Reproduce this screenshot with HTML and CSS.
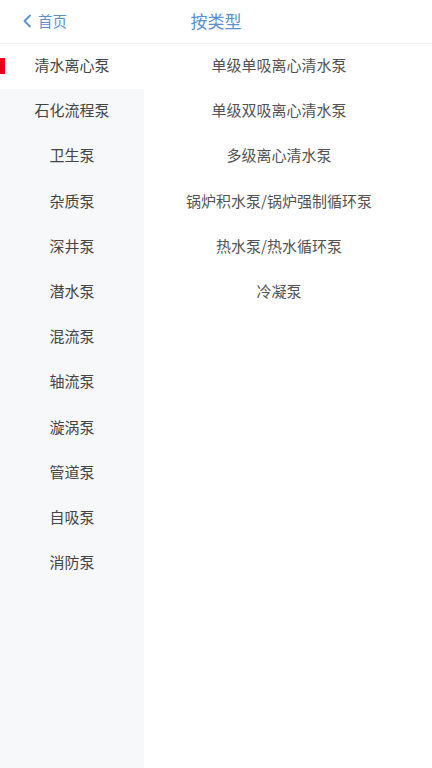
FILE: index.html
```html
<!DOCTYPE html>
<html lang="zh-CN">
<head>
<meta charset="utf-8">
<link rel="stylesheet" href="styles.css">
</head>
<body>
<div class="page">
  <header class="header">
    <a class="back">
      <svg class="chev" width="10" height="14" viewBox="0 0 10 14"><path d="M8 1.5 L2.5 7 L8 12.5" fill="none" stroke="#5b8fd0" stroke-width="1.8" stroke-linecap="round" stroke-linejoin="round"/></svg>
      <span>首页</span>
    </a>
    <div class="title">按类型</div>
  </header>
  <div class="body">
    <nav class="side">
      <div class="side-item active">清水离心泵</div>
      <div class="side-item">石化流程泵</div>
      <div class="side-item">卫生泵</div>
      <div class="side-item">杂质泵</div>
      <div class="side-item">深井泵</div>
      <div class="side-item">潜水泵</div>
      <div class="side-item">混流泵</div>
      <div class="side-item">轴流泵</div>
      <div class="side-item">漩涡泵</div>
      <div class="side-item">管道泵</div>
      <div class="side-item">自吸泵</div>
      <div class="side-item">消防泵</div>
    </nav>
    <main class="list">
      <div class="list-item">单级单吸离心清水泵</div>
      <div class="list-item">单级双吸离心清水泵</div>
      <div class="list-item">多级离心清水泵</div>
      <div class="list-item">锅炉积水泵/锅炉强制循环泵</div>
      <div class="list-item">热水泵/热水循环泵</div>
      <div class="list-item">冷凝泵</div>
    </main>
  </div>
</div>
</body>
</html>
```
FILE: styles.css
```css
* { box-sizing: border-box; }
html, body { margin: 0; padding: 0; }
body {
  width: 432px;
  height: 768px;
  overflow: hidden;
  background: #fff;
  font-family: "Noto Sans CJK SC", "Noto Sans", sans-serif;
}
.page {
  display: flex;
  flex-direction: column;
  height: 768px;
}
.header {
  position: relative;
  height: 44px;
  flex: none;
  border-bottom: 1px solid #f0f1f3;
  display: flex;
  align-items: center;
}
.back {
  display: flex;
  align-items: center;
  gap: 6px;
  padding-left: 22px;
  color: #5b8fd0;
  font-size: 14.5px;
  padding-bottom: 2px;
}
.chev { display: block; }
.title {
  position: absolute;
  left: 0;
  right: 0;
  top: 0;
  height: 43px;
  line-height: 41px;
  text-align: center;
  color: #5b8fd0;
  font-size: 17px;
  pointer-events: none;
}
.body {
  flex: 1;
  display: flex;
  min-height: 0;
}
.side {
  width: 144px;
  flex: none;
  background: #f7f8fa;
}
.side-item {
  position: relative;
  height: 45.2px;
  line-height: 41px;
  text-align: center;
  font-size: 15px;
  color: #444;
}
.side-item.active {
  background: #fff;
}
.side-item.active::before {
  content: "";
  position: absolute;
  left: 0;
  top: 14px;
  width: 5px;
  height: 16px;
  background: #e8001c;
}
.list {
  flex: 1;
  padding-right: 18px;
}
.list-item {
  height: 45.2px;
  line-height: 41px;
  text-align: center;
  font-size: 15px;
  color: #525252;
}
```
